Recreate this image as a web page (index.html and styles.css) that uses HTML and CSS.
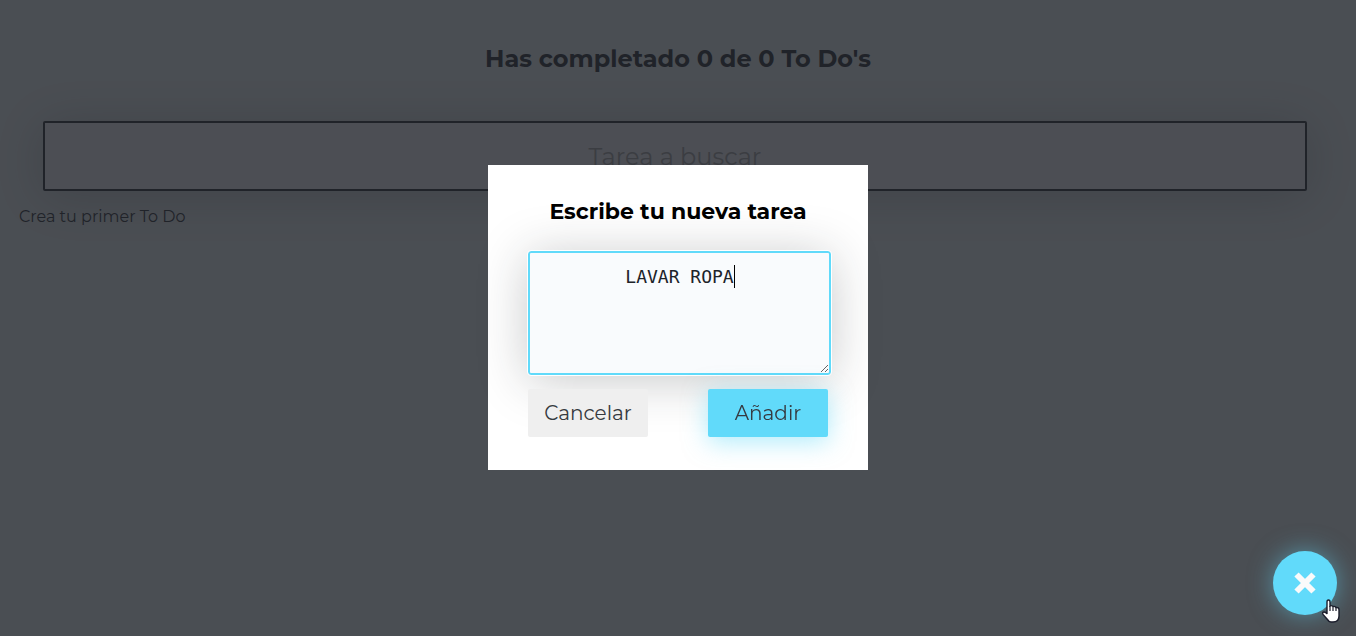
FILE: index.html
```
<!DOCTYPE html>
<html lang="es">
<head>
<meta charset="utf-8">
<meta name="viewport" content="width=device-width, initial-scale=1">
<title>To Do's</title>
<link rel="stylesheet" href="styles.css">
</head>
<body>
<main class="app">
  <h2 class="counter">Has completado 0 de 0 To Do's</h2>
  <input class="search" type="text" placeholder="Tarea a buscar" aria-label="Tarea a buscar">
  <p class="empty">Crea tu primer To Do</p>
</main>
<div class="overlay">
  <form class="modal">
    <label class="modal-title" for="task">Escribe tu nueva tarea</label>
    <div class="field">
      <textarea class="task" id="task">LAVAR ROPA</textarea>
      <span class="caret"></span>
    </div>
    <div class="actions">
      <button class="button cancel" type="button">Cancelar</button>
      <button class="button add" type="submit">Añadir</button>
    </div>
  </form>
</div>
<button class="fab" type="button" aria-label="Cerrar">
  <svg width="22" height="22" viewBox="0 0 22 22" aria-hidden="true"><path d="M2.5 2.5L19.5 19.5M19.5 2.5L2.5 19.5" stroke="#fafafa" stroke-width="6"/></svg>
</button>
<svg class="pointer" width="20" height="25" viewBox="0 0 20 25" aria-hidden="true"><path d="M6 15V3Q6 1 7.500 1T9 3V7Q10.500 6 12 7.500Q14 7 15 8.500Q18 8 18 11V17Q18 23 12 23H10Q8 23 6 20L2 15.500Q1 13 3 13T6 15Z" fill="#fff" stroke="#1b1d2b" stroke-width="1.4"/><path d="M9 7V12M12 8V12M15 9V12" stroke="#1b1d2b" stroke-width="1.2"/></svg>
</body>
</html>
```
FILE: styles.css
```
body {
  margin: 0;
  min-height: 100vh;
  background: #f0f8f8;
  color: #202329;
  font-family: Montserrat, Inter, sans-serif;
  overflow: hidden;
}

.app {
  display: flex;
  flex-direction: column;
  padding: 0 19px;
}

.counter {
  margin: 0;
  padding: 43px 0 46px;
  font-size: 24px;
  line-height: 32px;
  font-weight: 700;
  text-align: center;
}

.search {
  box-sizing: border-box;
  height: 70px;
  margin: 0 30px 0 24px;
  border: 2px solid #202329;
  border-radius: 2px;
  background: #f9fafc;
  box-shadow: 0 5px 50px rgba(32, 35, 41, 0.25);
  font: 400 24px/30px Montserrat, Inter, sans-serif;
  text-align: center;
}

.search::placeholder {
  color: #a5a5a5;
}

.empty {
  margin: 16px 0 0;
  font-size: 16px;
  line-height: 20px;
  font-weight: 400;
}

.overlay {
  position: fixed;
  inset: 0;
  display: flex;
  align-items: center;
  justify-content: center;
  padding-bottom: 2px;
  background: rgba(32, 35, 41, 0.8);
}

.modal {
  display: flex;
  flex-direction: column;
  width: 300px;
  padding: 33px 40px;
  background: #fff;
}

.modal-title {
  margin-bottom: 26px;
  color: #000;
  font-size: 22px;
  line-height: 27px;
  font-weight: 700;
  text-align: center;
}

.field {
  position: relative;
  margin-right: -3px;
}

.task {
  display: block;
  box-sizing: border-box;
  width: 100%;
  height: 124px;
  padding: 12px;
  border: 2px solid #61dafa;
  border-radius: 3px;
  outline: 1px solid #fff;
  background: #f9fbfd;
  box-shadow: 0 5px 50px rgba(32, 35, 41, 0.25);
  color: #202329;
  font: 18px/24px "DejaVu Sans Mono", monospace;
  text-align: center;
  resize: both;
}

.caret {
  position: absolute;
  top: 14px;
  left: calc(50% + 54px);
  width: 1px;
  height: 23px;
  background: #000;
}

.actions {
  display: flex;
  justify-content: space-between;
  margin-top: 14px;
}

.button {
  position: relative;
  width: 120px;
  height: 48px;
  padding: 0;
  border: 0;
  border-radius: 2px;
  color: #363a40;
  font: 400 20px/24px Montserrat, Inter, sans-serif;
}

.cancel {
  background: #efefef;
}

.add {
  background: #61dafa;
  box-shadow: 0 5px 25px rgba(97, 218, 250, 0.5);
}

.fab {
  position: fixed;
  right: 19px;
  bottom: 21px;
  display: grid;
  place-items: center;
  width: 64px;
  height: 64px;
  padding: 0;
  border: 0;
  border-radius: 50%;
  background: #61dafa;
  box-shadow: 0 0 25px rgba(97, 218, 250, 0.5);
}

.pointer {
  position: fixed;
  right: 15px;
  bottom: 12px;
}
```
